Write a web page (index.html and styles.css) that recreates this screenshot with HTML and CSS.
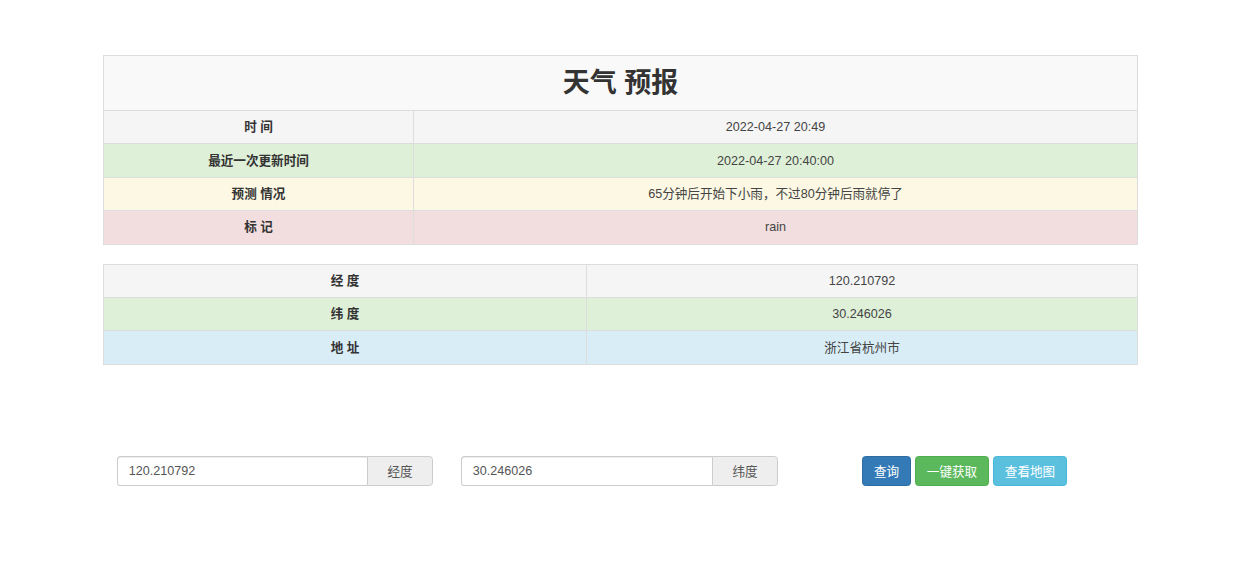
FILE: index.html
```html
<!DOCTYPE html>
<html lang="zh">
<head>
<meta charset="utf-8">
<title>天气预报</title>
<link rel="stylesheet" href="styles.css">
</head>
<body>
<div class="page">
  <table class="tbl tbl-main">
    <colgroup><col class="c1"><col></colgroup>
    <tr class="title-row"><th colspan="2" class="title">天气 预报</th></tr>
    <tr class="r-active"><th>时 间</th><td>2022-04-27 20:49</td></tr>
    <tr class="r-success"><th>最近一次更新时间</th><td>2022-04-27 20:40:00</td></tr>
    <tr class="r-warning"><th>预测 情况</th><td>65分钟后开始下小雨，不过80分钟后雨就停了</td></tr>
    <tr class="r-danger"><th>标 记</th><td>rain</td></tr>
  </table>
  <table class="tbl tbl-loc">
    <colgroup><col class="c2"><col></colgroup>
    <tr class="r-active"><th>经 度</th><td>120.210792</td></tr>
    <tr class="r-success"><th>纬 度</th><td>30.246026</td></tr>
    <tr class="r-info"><th>地 址</th><td>浙江省杭州市</td></tr>
  </table>
</div>
<div class="controls">
  <div class="input-group">
    <input class="form-control" type="text" value="120.210792">
    <span class="addon">经度</span>
  </div>
  <div class="input-group g2">
    <input class="form-control" type="text" value="30.246026">
    <span class="addon">纬度</span>
  </div>
  <div class="btns">
    <button class="btn btn-primary">查询</button>
    <button class="btn btn-success">一键获取</button>
    <button class="btn btn-info">查看地图</button>
  </div>
</div>
</body>
</html>
```

FILE: styles.css
```css
* { box-sizing: border-box; }
html, body { margin: 0; padding: 0; background: #fff; }
body {
  font-family: "Liberation Sans", Arial, "Noto Sans CJK SC", sans-serif;
  font-size: 12.6px;
  color: #333;
}
.page {
  width: 1035px;
  margin: 55px auto 0 103px;
}
.tbl {
  width: 100%;
  border-collapse: collapse;
  border: 1px solid #ddd;
  table-layout: fixed;
}
.tbl th, .tbl td {
  border: 1px solid #ddd;
  padding: 7px;
  height: 33.4px;
  line-height: 18px;
  text-align: center;
  vertical-align: middle;
}
.tbl th { font-weight: bold; }
.tbl td { color: #444; }
.tbl-main { margin-bottom: 19px; }
.title-row th {
  background: #f9f9f9;
  height: 55px;
  font-size: 27px;
  line-height: 30px;
  color: #333;
}
.c1 { width: 310px; }
.c2 { width: 483px; }
.r-active th, .r-active td { background: #f5f5f5; }
.r-success th, .r-success td { background: #dff0d8; }
.r-warning th, .r-warning td { background: #fcf8e3; }
.r-danger th, .r-danger td { background: #f2dede; }
.r-info th, .r-info td { background: #d9edf7; }

.controls {
  display: flex;
  align-items: center;
  margin-top: 91px;
  padding-left: 117px;
}
.input-group {
  display: flex;
  width: 316px;
  height: 30.5px;
}
.g2 { margin-left: 28px; width: 317px; }
.form-control {
  flex: 1;
  min-width: 0;
  height: 100%;
  border: 1px solid #ccc;
  border-right: 0;
  border-radius: 3.6px 0 0 3.6px;
  padding: 0 10.8px;
  font: inherit;
  font-size: 12.6px;
  color: #555;
  box-shadow: inset 0 1px 1px rgba(0,0,0,.075);
  outline: none;
}
.addon {
  width: 66px;
  height: 100%;
  display: flex;
  align-items: center;
  justify-content: center;
  background: #eee;
  border: 1px solid #ccc;
  border-radius: 0 3.6px 3.6px 0;
  color: #555;
  font-size: 12.6px;
}
.btns {
  display: flex;
  gap: 4px;
  margin-left: 84px;
}
.btn {
  height: 30.5px;
  padding: 0;
  border: 1px solid transparent;
  border-radius: 3.6px;
  color: #fff;
  font: inherit;
  font-size: 12.6px;
  cursor: pointer;
}
.btn-primary { background: #337ab7; border-color: #2e6da4; width: 49px; }
.btn-success { background: #5cb85c; border-color: #4cae4c; width: 74px; }
.btn-info { background: #5bc0de; border-color: #46b8da; width: 74px; }
```
